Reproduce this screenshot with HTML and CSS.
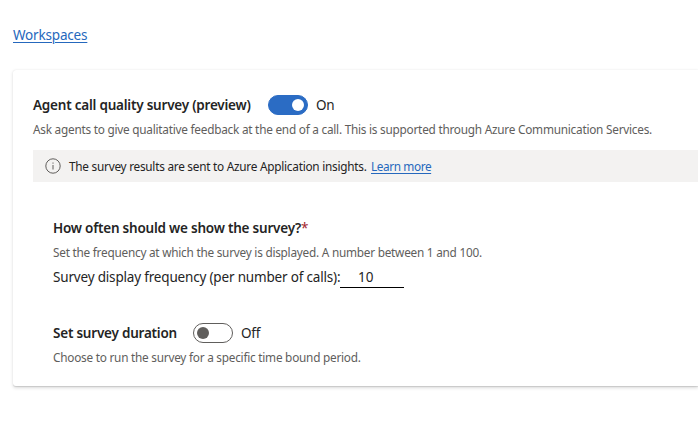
FILE: index.html
```html
<!DOCTYPE html>
<html lang="en">
<head>
<meta charset="utf-8">
<title>Workspaces</title>
<link rel="stylesheet" href="styles.css">
</head>
<body>
<nav class="crumbs"><a class="crumb-link" href="#">Workspaces</a></nav>
<main class="card">
  <section>
    <div class="toggle-row">
      <h2 class="title title-agent">Agent call quality survey (preview)</h2>
      <span class="switch switch-on" role="switch" aria-checked="true"></span>
      <span class="state">On</span>
    </div>
    <p class="hint hint-agent">Ask agents to give qualitative feedback at the end of a call. This is supported through Azure Communication Services.</p>
    <div class="notice">
      <svg class="info" viewBox="0 0 16 16" aria-hidden="true"><circle cx="8" cy="8" r="7.2"/><path d="M8 7v4.5M8 4.5v1.2"/></svg>
      <span class="notice-text">The survey results are sent to Azure Application insights.</span>
      <a class="notice-link" href="#">Learn more</a>
    </div>
  </section>
  <section class="nested">
    <h2 class="title title-often">How often should we show the survey?<span class="required">*</span></h2>
    <p class="hint hint-frequency">Set the frequency at which the survey is displayed. A number between 1 and 100.</p>
    <div class="frequency">
      <label class="frequency-label" for="frequency">Survey display frequency (per number of calls):</label>
      <input class="frequency-input" id="frequency" value="10">
    </div>
    <div class="toggle-row duration">
      <h2 class="title title-duration">Set survey duration</h2>
      <span class="switch" role="switch" aria-checked="false"></span>
      <span class="state">Off</span>
    </div>
    <p class="hint hint-duration">Choose to run the survey for a specific time bound period.</p>
  </section>
</main>
</body>
</html>
```
FILE: styles.css
```css
* { box-sizing: border-box; }
body {
  margin: 0;
  height: 438px;
  overflow: hidden;
  background: #fff;
  color: #242424;
  font: 13.5px/20px "Noto Sans", "Open Sans", sans-serif;
  letter-spacing: -.18px;
}
h2, p { margin: 0; white-space: nowrap; }
a { color: #2568bd; text-decoration: underline; text-underline-offset: 2px; text-decoration-thickness: 1px; }
.crumbs { padding: 25px 0 0 13px; height: 70px; }
.card {
  height: 316px;
  margin-left: 13px;
  padding: 25px 0 0 20px;
  border-radius: 3px 0 0 3px;
  box-shadow: 0 1.6px 3.6px rgba(0, 0, 0, .14), 0 .3px .9px rgba(0, 0, 0, .11);
}
.toggle-row { display: flex; align-items: center; height: 20px; }
.title { font-size: 13.5px; line-height: 20px; font-weight: 600; letter-spacing: -.22px; }
.title-agent { width: 219px; }
.title-duration { width: 124px; }
.switch {
  display: flex;
  align-items: center;
  width: 40px;
  height: 20px;
  margin: 0 8px 0 16px;
  padding: 0 3px;
  border: 1px solid #605e5c;
  border-radius: 10px;
}
.switch::before { content: ""; width: 12px; height: 12px; border-radius: 50%; background: #605e5c; }
.switch-on { justify-content: flex-end; background: #2b6cc4; border-color: #2b6cc4; }
.switch-on::before { background: #fff; }
.hint { color: #605e5c; font-size: 11.8px; line-height: 16px; letter-spacing: -.24px; }
.hint-agent { margin-top: 6px; }
.notice {
  display: flex;
  align-items: center;
  height: 32px;
  margin-top: 13px;
  padding-left: 12px;
  background: #f3f2f1;
  font-size: 11.8px;
  line-height: 16px;
  letter-spacing: -.25px;
  white-space: nowrap;
}
.info { width: 16px; height: 16px; margin: -1px 8px 0 0; fill: none; stroke: #605e5c; stroke-width: 1; }
.notice-text { width: 302px; }
.notice-link { letter-spacing: -.4px; }
.nested { padding: 36px 0 0 20px; }
.required { color: #a4262c; font-weight: 400; }
.hint-frequency { margin-top: 6px; }
.frequency { display: flex; height: 27px; margin-top: 7px; }
.frequency-label { width: 287px; white-space: nowrap; }
.frequency-input {
  width: 64px;
  height: 21px;
  padding: 0 0 1px 18px;
  border: 0;
  border-bottom: 1px solid #000;
  background: transparent;
  color: inherit;
  font: inherit;
}
.duration { margin-top: 29px; }
.hint-duration { margin-top: 6px; }
```
